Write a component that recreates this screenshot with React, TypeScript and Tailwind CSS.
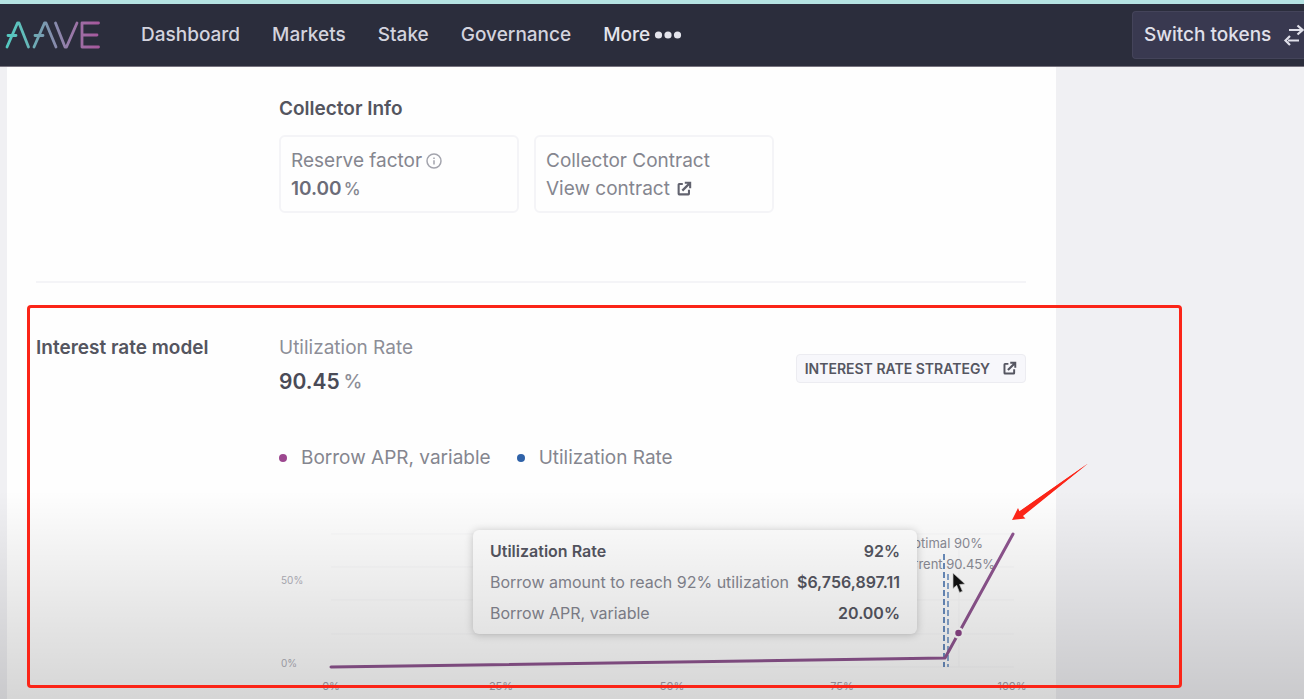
import React from "react";

const navLinks = ["Dashboard", "Markets", "Stake", "Governance"];

const xTicks = [
  { x: 52, label: "0%" },
  { x: 222, label: "25%" },
  { x: 393, label: "50%" },
  { x: 563, label: "75%" },
  { x: 733, label: "100%" },
];

const tooltipRows = [
  { label: "Utilization Rate", value: "92%", strong: true },
  { label: "Borrow amount to reach 92% utilization", value: "$6,756,897.11", strong: false },
  { label: "Borrow APR, variable", value: "20.00%", strong: false },
];

function Logo() {
  return (
    <svg width="96" height="28" viewBox="0 0 96 28" fill="none" aria-label="Aave" role="img">
      <defs>
        <linearGradient id="brand" x1="0" y1="0" x2="96" y2="0" gradientUnits="userSpaceOnUse">
          <stop offset="0" stopColor="#52c9c1" />
          <stop offset="0.2" stopColor="#62bdba" />
          <stop offset="0.45" stopColor="#7f93ae" />
          <stop offset="0.7" stopColor="#9a78a8" />
          <stop offset="1" stopColor="#a8559c" />
        </linearGradient>
      </defs>
      <g stroke="url(#brand)" strokeWidth="2.800" strokeLinecap="round" strokeLinejoin="round">
        <path d="M2 26 12.500 2H14L23.500 26M3 14.500H11" />
        <path d="M29 26 39.500 2H41L51 26M30 14.500H38" />
        <path d="M50.500 2 60 26H61.500L72 2" />
        <path d="M93.500 2H77V26H93.500M77 14H92" />
      </g>
    </svg>
  );
}

function ExternalLink({ className }: { className: string }) {
  return (
    <svg className={className} viewBox="0 0 20 20" fill="currentColor" aria-hidden="true">
      <path d="M8.500 2.500v2.600H4.600v10.300h10.300v-4.400h2.600V16a2 2 0 0 1-2 2H4a2 2 0 0 1-2-2V4.500a2 2 0 0 1 2-2h4.500Z" />
      <path d="M11 1h8v8h-2.600V5.500l-7.500 7.500-2-2 7.500-7.500H11V1Z" />
    </svg>
  );
}

function SwapIcon() {
  return (
    <svg className="h-6 w-6 shrink-0" viewBox="0 0 24 24" fill="none" stroke="currentColor" strokeWidth="2.200" aria-hidden="true">
      <path d="M6 7h12" />
      <path d="M5 17.500h11" />
      <path d="M14.500 2.500 19.500 7 14.500 11.500M7 13 2.500 17.500 7 22" />
    </svg>
  );
}

function InfoIcon() {
  return (
    <svg className="h-4 w-4" viewBox="0 0 16 16" fill="none" stroke="#a3a4ad" aria-hidden="true">
      <circle cx="8" cy="8" r="7" strokeWidth="1.500" />
      <path d="M8 7.300V11.500M8 4.500V6" strokeWidth="1.500" />
    </svg>
  );
}

function Header() {
  return (
    <header className="flex h-[67px] items-center border-t-4 border-b border-t-[#b5e2e2] border-b-[#77737f] bg-[#2b2d3c] pl-[5px] text-[19px] font-medium text-[#d3d3de]">
      <a href="#home" className="mr-10">
        <Logo />
      </a>
      <nav className="flex flex-1 items-center gap-8">
        {navLinks.map((label) => (
          <a key={label} href={"#" + label.toLowerCase()}>
            {label}
          </a>
        ))}
        <button type="button" className="flex items-center gap-1 text-[#e4e4ec]">
          More
          <svg width="28" height="8" viewBox="0 0 28 8" fill="currentColor" aria-hidden="true">
            <circle cx="4.500" cy="4" r="3.600" />
            <circle cx="14" cy="4" r="3.600" />
            <circle cx="23.500" cy="4" r="3.600" />
          </svg>
        </button>
      </nav>
      <button
        type="button"
        className="flex h-12 w-[172px] shrink-0 items-center gap-3 overflow-hidden rounded-l border border-r-0 border-[#44445a] bg-[#393950] pl-[11px] whitespace-nowrap text-[#e0e0ea]"
      >
        Switch tokens
        <SwapIcon />
      </button>
    </header>
  );
}

function CollectorInfo() {
  return (
    <section className="ml-[243px] h-[214px] pt-7">
      <h2 className="text-[19px] leading-7 font-semibold text-[#54555f]">Collector Info</h2>
      <div className="mt-3 flex gap-[15px] text-[19px] leading-7 text-[#85868f]">
        <div className="w-[240px] rounded-md border-2 border-[#f4f4f7] px-[10px] pt-[10px] pb-2">
          <div className="flex items-center gap-1">
            Reserve factor <InfoIcon />
          </div>
          <div className="flex items-center gap-0.5">
            <span className="font-semibold text-[#6b6c78]">10.00</span>
            <span className="text-[17px] font-medium">%</span>
          </div>
        </div>
        <div className="w-[240px] rounded-md border-2 border-[#f4f4f7] px-[10px] pt-[10px] pb-2">
          <div>Collector Contract</div>
          <a href="#contract" className="flex items-center gap-1.5">
            View contract <ExternalLink className="h-4 w-4 text-[#62636f]" />
          </a>
        </div>
      </div>
    </section>
  );
}

function RateChart() {
  return (
    <div className="relative mt-[45px]">
      <svg className="block w-full" viewBox="0 0 747 183" fill="none" fontFamily="Inter, sans-serif">
        <g stroke="#f7f7f8" strokeWidth="1">
          <path d="M52 17H735M52 50H735M52 83H735M52 117H735M52 150H735M680 17V150" />
        </g>
        <g fontSize="10" fill="#b0b0b9">
          <text x="2" y="67">50%</text>
          <text x="2" y="150">0%</text>
        </g>
        <g fontSize="11" fill="#a3a3ac" textAnchor="middle">
          {xTicks.map((tick) => (
            <text key={tick.label} x={tick.x} y="173">
              {tick.label}
            </text>
          ))}
        </g>
        <g fontSize="13" fill="#8b8c96" textAnchor="end">
          <text x="704" y="31">Optimal 90%</text>
          <text x="716" y="52">Current 90.45%</text>
        </g>
        <path d="M665 37V150" stroke="#6a8dbd" strokeWidth="2" strokeDasharray="6 3" />
        <path d="M669 57V150" stroke="#8aa8cf" strokeWidth="2" strokeDasharray="6 3" />
        <path d="M52 150 666 141 734 17" stroke="#8f5590" strokeWidth="3" strokeLinecap="round" strokeLinejoin="round" />
        <circle cx="679.500" cy="116" r="4.500" fill="#8b4488" stroke="#ffffff" strokeWidth="2.500" />
      </svg>
      <div className="absolute top-[13px] left-[194px] flex w-[444px] flex-col gap-[11px] rounded-md bg-white px-[17px] py-[11px] text-[16px] leading-5 shadow-[0_1px_8px_rgba(0,0,0,0.22)]">
        {tooltipRows.map((row) => (
          <div key={row.label} className="flex justify-between whitespace-nowrap">
            <span className={row.strong ? "font-semibold text-[#555661]" : "text-[#868791]"}>{row.label}</span>
            <span className="font-semibold text-[#555661]">{row.value}</span>
          </div>
        ))}
      </div>
      <svg className="absolute top-[55px] left-[673px] h-[22px] w-[15px]" viewBox="0 0 15 22" aria-hidden="true">
        <path d="M1 1V16.500L4.700 13.300 7.500 20.500 10.500 19.300 7.600 12.500 13 12Z" fill="#111111" stroke="#d8d8d8" strokeWidth="0.700" />
      </svg>
    </div>
  );
}

function InterestRateModel() {
  return (
    <section className="flex border-t-2 border-[#f4f4f7] pt-[51px]">
      <h2 className="w-[243px] shrink-0 text-[19px] leading-7 font-semibold text-[#54555f]">Interest rate model</h2>
      <div className="min-w-0 flex-1">
        <div className="flex items-start justify-between">
          <div>
            <div className="text-[19px] leading-7 text-[#8d8e97]">Utilization Rate</div>
            <div className="mt-1 flex items-center gap-1 text-[21px] leading-8">
              <span className="font-semibold text-[#4a4b57]">90.45</span>
              <span className="text-[19px] font-medium text-[#8d8e97]">%</span>
            </div>
          </div>
          <a
            href="#strategy"
            className="mt-5 flex h-[29px] items-center gap-3 rounded border border-[#ececf1] bg-[#f7f7fb] px-2 text-[14px] font-semibold text-[#555661] uppercase"
          >
            Interest rate strategy <ExternalLink className="h-[15px] w-[15px]" />
          </a>
        </div>
        <ul className="mt-[46px] flex gap-[26px] text-[19px] leading-7 text-[#85868f]">
          <li className="flex items-center gap-[14px]">
            <span className="h-2 w-2 rounded-full bg-[#9c478f]" />
            Borrow APR, variable
          </li>
          <li className="flex items-center gap-[14px]">
            <span className="h-2 w-2 rounded-full bg-[#2f62a8]" />
            Utilization Rate
          </li>
        </ul>
        <RateChart />
      </div>
    </section>
  );
}

function Annotations() {
  return (
    <div className="pointer-events-none absolute inset-0">
      <div className="absolute top-[305px] left-[27px] h-[383px] w-[1155px] rounded-[4px] border-3 border-[#fb2518]" />
      <svg className="absolute top-[463px] left-[1012px] h-[59px] w-[77px]" viewBox="0 0 77 59" aria-hidden="true">
        <path d="M76 0.500 9 53.500 5 50Z" fill="#fb2518" />
        <path d="M76 0.500 11 53 13.500 55.500 0 57 6 45 7.500 48.500Z" fill="#fb2518" />
      </svg>
    </div>
  );
}

export default function App() {
  return (
    <div className="relative min-h-screen overflow-hidden bg-[#f0f0f3] font-['Inter',sans-serif]">
      <Header />
      <main className="mr-[248px] ml-[7px] bg-[#fefefe] pr-[30px] pl-[29px]">
        <CollectorInfo />
        <InterestRateModel />
      </main>
      <div className="pointer-events-none absolute inset-x-0 bottom-0 h-[210px] bg-linear-to-b from-black/0 to-black/16" />
      <Annotations />
    </div>
  );
}
